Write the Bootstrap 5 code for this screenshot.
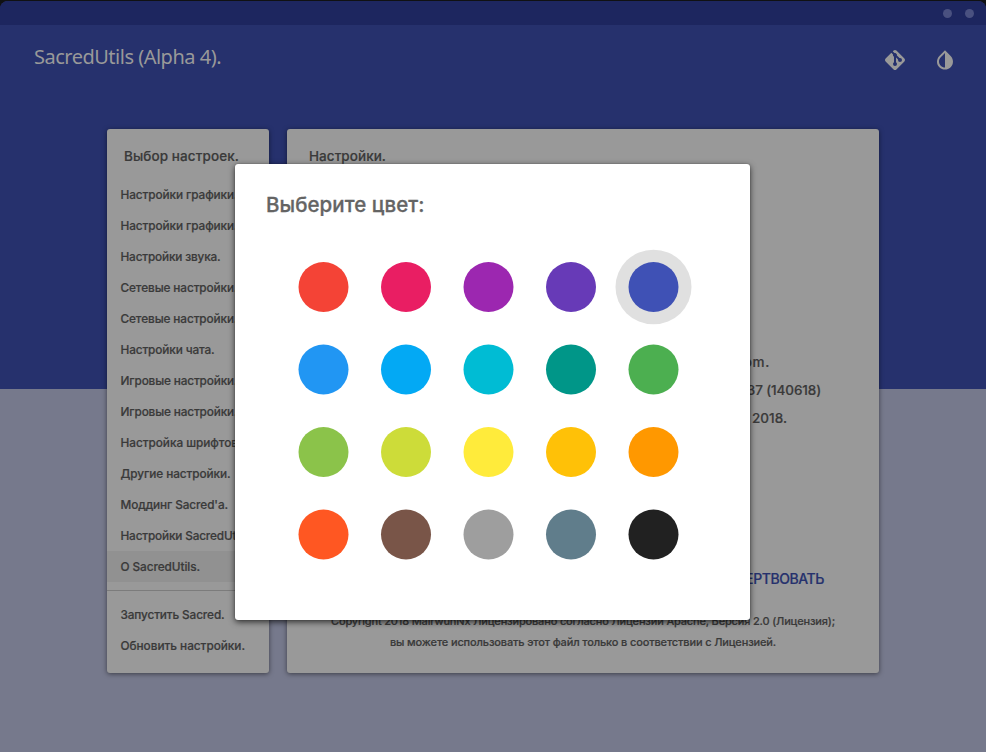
<!DOCTYPE html>
<html lang="ru">
<head>
<meta charset="utf-8">
<title>SacredUtils</title>
<link href="https://cdn.jsdelivr.net/npm/bootstrap@5.3.0/dist/css/bootstrap.min.css" rel="stylesheet">
<style>
body{margin:0;background:#111;font-family:Inter,Roboto,sans-serif;font-weight:500;color:#3a3a3a;overflow:hidden}
.window{height:752px;padding-top:1px;background:#101113}
.frame{height:751px;border-radius:8px 8px 0 0;background:linear-gradient(#26316d 388px,#76798c 388px)}
.titlebar{height:24px;background:#1d265f;padding-right:12px;gap:13px}
.titlebar i{width:9px;height:9px;border-radius:50%;background:#4a5180}
.appbar{height:104px;padding:19px 29px 0 34px}
.apptitle{font:400 20px/25px "Noto Sans",sans-serif;color:#999;white-space:nowrap}
.tools{gap:26px;padding-top:4px}
.panels{gap:18px;padding-left:107px}
.panel{height:544px;background:#999;border-radius:3px;box-shadow:0 1px 5px rgba(0,0,0,.5);white-space:nowrap;overflow:hidden;-webkit-text-stroke:.2px currentColor}
.side{width:162px}
.main{width:592px}
.ptitle{font-size:13.5px;line-height:20px;padding-top:17px;height:50px}
.side .ptitle{padding-left:17px}
.main .ptitle{padding-left:22px}
.entry{height:31px;line-height:32px;padding-left:13.5px;font-size:11.8px}
.entry.on{background:#919191}
.rule{height:1px;background:#7c7c7c;margin:8px 0}
.facts{height:386px;padding-top:169px;font-size:13.5px;line-height:28px}
.donate{color:#26316d;font-size:14px;line-height:28px;height:46px;padding-right:55px}
.legal{font-size:11px;line-height:21px}
.picker{left:235px;top:164px;width:515px;height:456px;background:#fff;border-radius:3px;box-shadow:0 2px 6px rgba(0,0,0,.7),0 0 1px rgba(0,0,0,.5);padding:26px 31px}
.picker h1{font-size:20.5px;line-height:30px;font-weight:500;color:#646464;margin:0 0 42px;white-space:nowrap;-webkit-text-stroke:.3px currentColor}
.swatches{width:393px;margin-left:32px}
.swatches svg{display:block;overflow:visible}
</style>
<script src="https://cdn.jsdelivr.net/npm/bootstrap@5.3.0/dist/js/bootstrap.bundle.min.js"></script>
</head>
<body>
<div class="window position-relative">
<div class="frame overflow-hidden">
  <div class="titlebar d-flex justify-content-end align-items-center"><i></i><i></i></div>
  <header class="appbar d-flex justify-content-between align-items-start">
    <div class="apptitle"><span data-w="187">SacredUtils (Alpha 4).</span></div>
    <div class="tools d-flex">
      <svg width="24" height="24" viewBox="0 0 24 24" fill="#999"><path d="M2.6 10.59 8.38 4.8l1.69 1.7c-.24.85.15 1.78.93 2.23v5.54c-.6.34-1 .99-1 1.73a2 2 0 0 0 4 0c0-.74-.4-1.39-1-1.73V9.41l2.07 2.09c-.07.15-.07.32-.07.5a2 2 0 1 0 2-2c-.18 0-.35 0-.5.07L13.93 7.5a1.98 1.98 0 0 0-1.15-2.34c-.43-.16-.88-.2-1.28-.09L9.8 3.38l.79-.78c.78-.79 2.04-.79 2.82 0l7.99 7.99c.79.78.79 2.04 0 2.82l-7.99 7.99c-.78.79-2.04.79-2.82 0L2.6 13.41c-.79-.78-.79-2.04 0-2.82z"/></svg>
      <svg width="24" height="24" viewBox="0 0 24 24" fill="#999"><path fill-rule="evenodd" d="M17.66 7.93 12 2.27 6.34 7.93c-3.12 3.12-3.12 8.19 0 11.31C7.9 20.8 9.95 21.58 12 21.58s4.1-.78 5.66-2.34c3.12-3.12 3.12-8.19 0-11.31zM12 19.59c-1.6 0-3.11-.62-4.24-1.76C6.62 16.69 6 15.19 6 13.59s.62-3.11 1.76-4.24L12 5.1z"/></svg>
    </div>
  </header>
  <div class="panels d-flex">
    <nav class="panel side">
      <div class="ptitle"><span data-w="115">Выбор настроек.</span></div>
      <div class="entry"><span data-w="117">Настройки графики.</span></div>
      <div class="entry"><span data-w="117">Настройки графики.</span></div>
      <div class="entry"><span data-w="100">Настройки звука.</span></div>
      <div class="entry"><span data-w="117">Сетевые настройки.</span></div>
      <div class="entry"><span data-w="117">Сетевые настройки.</span></div>
      <div class="entry"><span data-w="94">Настройки чата.</span></div>
      <div class="entry"><span data-w="117">Игровые настройки.</span></div>
      <div class="entry"><span data-w="117">Игровые настройки.</span></div>
      <div class="entry"><span data-w="121">Настройка шрифтов.</span></div>
      <div class="entry"><span data-w="110">Другие настройки.</span></div>
      <div class="entry"><span data-w="107.5">Моддинг Sacred'а.</span></div>
      <div class="entry"><span data-w="131">Настройки SacredUtils.</span></div>
      <div class="entry on"><span data-w="79.5">О SacredUtils.</span></div>
      <div class="rule"></div>
      <div class="entry"><span data-w="104">Запустить Sacred.</span></div>
      <div class="entry"><span data-w="124.5">Обновить настройки.</span></div>
    </nav>
    <main class="panel main">
      <div class="ptitle"><span data-w="77">Настройки.</span></div>
      <div class="facts text-end">
        <div style="padding-right:109px"><span data-w="78">gmail.com.</span></div>
        <div style="padding-right:58px"><span data-w="86">0.37 (140618)</span></div>
        <div style="padding-right:92px"><span data-w="74">июня 2018.</span></div>
      </div>
      <div class="donate text-end"><span data-w="112">ПОЖЕРТВОВАТЬ</span></div>
      <div class="legal text-center"><span data-w="504">Copyright 2018 MairwunNx Лицензировано согласно Лицензии Apache, Версия 2.0 (Лицензия);</span><br><span data-w="386">вы можете использовать этот файл только в соответствии с Лицензией.</span></div>
    </main>
  </div>
</div>
<section class="picker position-absolute">
  <h1><span data-w="158.5">Выберите цвет:</span></h1>
  <div class="swatches"><svg width="381" height="298" id="swatches"></svg></div>
</section>
</div>
<script>
const colors='#f44336 #e91e63 #9c27b0 #673ab7 #3f51b5 #2196f3 #03a9f4 #00bcd4 #009688 #4caf50 #8bc34a #cddc39 #ffeb3b #ffc107 #ff9800 #ff5722 #795548 #9e9e9e #607d8b #212121'.split(' ');
document.getElementById('swatches').innerHTML='<ellipse cx="355.5" cy="25" rx="38" ry="37.3" fill="#e0e0e0"/>'+
  colors.map((c,i)=>`<circle cx="${25.5+82.5*(i%5)}" cy="${25+82.5*Math.floor(i/5)}" r="25" fill="${c}"/>`).join('');
document.querySelectorAll('[data-w]').forEach(e=>{
  const d=(+e.dataset.w-e.getBoundingClientRect().width)/e.textContent.length;
  e.style.letterSpacing=d+'px';
});
</script>
</body>
</html>
